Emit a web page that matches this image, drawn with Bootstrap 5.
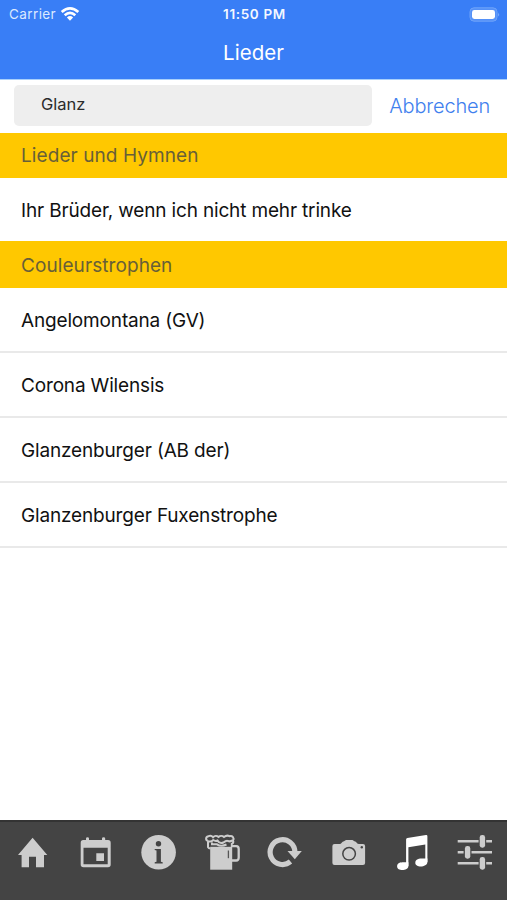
<!DOCTYPE html>
<html lang="de">
<head>
<meta charset="utf-8">
<meta name="viewport" content="width=device-width, initial-scale=1">
<title>Lieder</title>
<link href="https://cdn.jsdelivr.net/npm/bootstrap@5.3.0/dist/css/bootstrap.min.css" rel="stylesheet">
<style>
body{font-family:Inter,"Liberation Sans",sans-serif;color:#111;background:#fff;overflow:hidden}
.app-head{height:80px;background:#397ef6;border-bottom:1px solid #a9d0fb;color:#f4f8ff}
.status{height:27px;font-size:13px;line-height:28px;padding:0 7px 0 9px}
.carrier{font-size:13.5px;letter-spacing:.4px;color:#dbe9ff}
.clock{font-weight:600;font-size:13.5px;letter-spacing:.65px}
.app-title{font-size:20.5px;line-height:24px;padding-top:14px;font-weight:400;letter-spacing:.05px;color:#fff}
.search{height:53px;padding:5px 17px 7px 14px}
.search-box{width:358px;height:41px;background:#eee;border-radius:5px;padding:0 27px;font-size:16.5px;color:#2b2b2b}
.search-box span{line-height:39px}
.cancel{font-size:20px;font-weight:300;letter-spacing:-.18px;color:#3f80ee;line-height:43px}
.item,.group-head{padding:0 21px;font-size:19px;white-space:nowrap}
.group-head{height:45px;line-height:45px;background:#ffc800;color:#685f38;font-weight:400;letter-spacing:.08px}
.group-head.tall{height:47px;line-height:49px}
.item{height:65px;line-height:65px;border-bottom:2px solid #e9e9e9;letter-spacing:-.16px}
.item.last-in-group{height:63px;line-height:65px;border:0}
.tabs{height:80px;background:#444;border-top:2px solid #333;padding-top:10px;color:#cdcdcd}
.tabs a{color:inherit;line-height:0}
.tabs a.current{color:#fff}
</style>
<script src="https://cdn.jsdelivr.net/npm/bootstrap@5.3.0/dist/js/bootstrap.bundle.min.js"></script>
</head>
<body>
<div class="d-flex flex-column vh-100">
<header class="app-head flex-shrink-0">
  <div class="status row g-0">
    <div class="col d-flex align-items-center"><span class="carrier">Carrier</span>
      <svg class="ms-1" width="20" height="16" viewBox="0 0 20 16" fill="none" stroke="#fff" stroke-width="2.7"><path d="M1.7 6.1Q10-1.4 18.3 6.1M4.7 9.2Q10 4.5 15.3 9.2"/><path d="M6.9 11.4Q10 8.8 13.1 11.4L10 14.7Z" fill="#fff" stroke="none"/></svg>
    </div>
    <div class="col-auto clock">11:50 PM</div>
    <div class="col d-flex align-items-center justify-content-end">
      <svg width="31" height="15" viewBox="0 0 31 15"><rect x="1" y=".8" width="27" height="13.4" rx="4" fill="#5591f8" stroke="#6ea3f9"/><rect x="3" y="3" width="23" height="9" rx="2.4" fill="#fff"/><path d="M29.2 5.5Q31 7.5 29.2 9.5Z" fill="#86b1fa"/></svg>
    </div>
  </div>
  <h1 class="app-title text-center m-0">Lieder</h1>
</header>
<div class="search d-flex justify-content-between flex-shrink-0">
  <div class="search-box"><span>Glanz</span></div>
  <div class="cancel">Abbrechen</div>
</div>
<main class="flex-grow-1">
  <div class="group-head"><span>Lieder und Hymnen</span></div>
  <div class="item last-in-group"><span>Ihr Brüder, wenn ich nicht mehr trinke</span></div>
  <div class="group-head tall"><span>Couleurstrophen</span></div>
  <div class="item"><span>Angelomontana (GV)</span></div>
  <div class="item"><span>Corona Wilensis</span></div>
  <div class="item"><span>Glanzenburger (AB der)</span></div>
  <div class="item"><span>Glanzenburger Fuxenstrophe</span></div>
</main>
<nav class="tabs row g-0 text-center flex-shrink-0">
  <a class="col" href="#" aria-label="Start"><svg width="40" height="40" fill="currentColor"><path d="M20.6 5.7 35.3 23H32V35.3H24V24.7H17V35.3H9.6V23H6Z"/></svg></a>
  <a class="col" href="#" aria-label="Kalender"><svg width="40" height="40" fill="currentColor"><path fill-rule="evenodd" d="M8.2 8H11V6.4Q11 5.3 12.5 5.3T14 6.4V8H27V6.4Q27 5.3 28.6 5.3T30.2 6.4V8H33Q35.7 8 35.7 10.7V32.6Q35.7 35.3 33 35.3H8.4Q5.7 35.3 5.7 32.6V10.7Q5.7 8 8.2 8ZM8.5 15.7V32.2H32.7V15.7ZM21.3 21.3H29V29H21.3Z"/></svg></a>
  <a class="col" href="#" aria-label="Info"><svg width="40" height="40"><circle cx="20.6" cy="20.3" r="17.3" fill="currentColor"/><g fill="#444"><circle cx="20.5" cy="11.7" r="2.7"/><path d="M16.7 17H22.9V29.8L24.7 30.3V31.4H16.7V30.3L18.5 29.8V18.6L16.7 18.1Z"/></g></svg></a>
  <a class="col" href="#" aria-label="Bier"><svg width="40" height="40" fill="none" stroke="currentColor"><path d="M8.2 14.8H30.2V37.7H8.2Z" fill="currentColor" stroke="none"/><path d="M30 14.2H34.2Q36.7 14.2 36.7 17V25.5Q36.7 28.5 34.2 28.5H30" stroke-width="2.3"/><path d="M5.8 8.800C3.300 8 3.600 4.500 6.500 4.200C8.500 3.200 10 4 11 5.200C12.500 3.600 15 3.600 16.500 5C18 3.600 20.500 3.600 22 5C24 3.400 26 3.400 27.500 4.200C30.500 3.400 32.500 6 31 8.300C31.800 10.500 30.500 11.500 29.800 11.800V15M6 8.800V15.200Q6.500 16.500 8.500 16.500" stroke-width="2"/><path d="M6 9.200Q9.500 10.300 11.200 8Q13.500 9.500 15.500 8.500Q17.500 12.300 21.500 10.500Q24.500 8 26 9Q28.500 10 30.500 8.300M10 10.500V12.300H15Q19 15 24.500 12.500" stroke-width="2"/><path d="M26.400 18.500V26.200" stroke="#555" stroke-width="1.300"/></svg></a>
  <a class="col" href="#" aria-label="Aktualisieren"><svg width="40" height="40"><path d="M29.9 20.3A12.400 12.400 0 1 0 25.500 29.600" fill="none" stroke="currentColor" stroke-width="5.200"/><path d="M22.500 19H36.800L29.800 27.300Z" fill="currentColor"/></svg></a>
  <a class="col" href="#" aria-label="Kamera"><svg width="40" height="40"><path d="M5.500 12H10.500Q12 12 12.700 10.800Q13.500 9.300 15 9.300L17 8H23.500L25.400 9.300Q27 9.300 27.700 10.800Q28.500 12 30 12H34Q36.100 12 36.100 14V31Q36.100 33 34 33H5.500Q3.400 33 3.400 31V14Q3.400 12 5.500 12Z" fill="currentColor"/><circle cx="20.100" cy="21.800" r="6.300" fill="none" stroke="#444" stroke-width="1.500"/><circle cx="32.800" cy="15.200" r="1.200" fill="#444"/></svg></a>
  <a class="col current" href="#" aria-label="Lieder"><svg width="40" height="40" fill="currentColor"><path d="M14.100 7.500Q14.100 6.200 15.400 6L34 3Q35.400 2.800 35.400 4.200V30H33.300V12.400L16.400 15.200V34H14.100Z"/><path d="M5.100 34.500C5.100 29.500 11 30.200 14.500 30.300H16.400V34C16.400 39 5.100 39.500 5.100 34.500ZM23.300 31C23.300 26 29.500 26.600 33.500 26.600H35.400V30C35.400 35.500 23.300 36 23.300 31Z"/></svg></a>
  <a class="col" href="#" aria-label="Einstellungen"><svg width="40" height="40"><path d="M2.700 9.300H23.600M31.200 9.300H37M2.700 20.300H8.600M16.500 20.300H37M2.700 31.300H23.600M31.200 31.300H37" stroke="currentColor" stroke-width="2.400"/><g fill="currentColor"><rect x="24.700" y="3" width="5.400" height="12.700" rx="2.400"/><rect x="9.900" y="14" width="5.400" height="12.700" rx="2.400"/><rect x="24.700" y="25" width="5.400" height="12.700" rx="2.400"/></g></svg></a>
</nav>
</div>
</body>
</html>
